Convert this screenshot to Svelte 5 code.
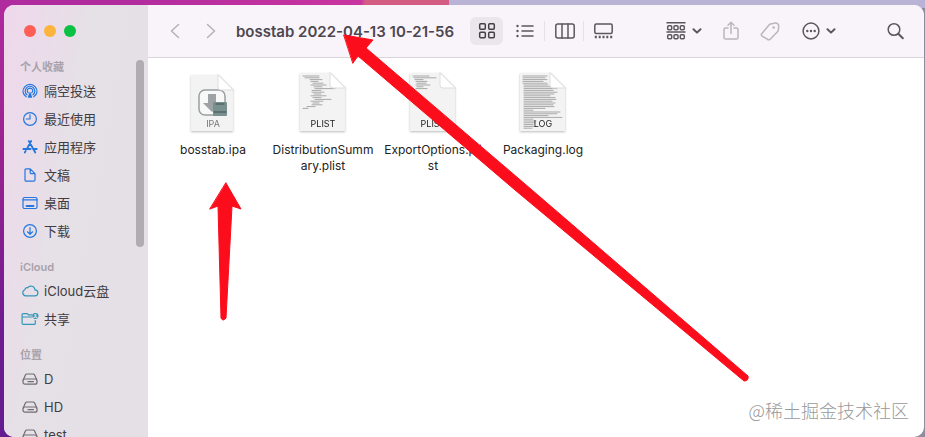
<script>
  const sections = [
    {
      title: "个人收藏",
      items: [
        { label: "隔空投送", icon: "airdrop" },
        { label: "最近使用", icon: "recent" },
        { label: "应用程序", icon: "apps" },
        { label: "文稿", icon: "document" },
        { label: "桌面", icon: "desktop" },
        { label: "下载", icon: "download" },
      ],
    },
    {
      title: "iCloud",
      items: [
        { label: "iCloud云盘", icon: "cloud" },
        { label: "共享", icon: "shared" },
      ],
    },
    {
      title: "位置",
      items: [
        { label: "D", icon: "disk" },
        { label: "HD", icon: "disk" },
        { label: "test", icon: "disk" },
      ],
    },
  ]

  // each line of a file preview is [indent, length]
  const files = [
    { name: "bosstab.ipa", type: "IPA", lines: [] },
    {
      name: "DistributionSummary.plist",
      type: "PLIST",
      lines: [
        [4, 16], [6, 14], [11, 12], [12, 7], [14, 10], [12, 15], [15, 8],
        [16, 20], [13, 9], [13, 12], [15, 7], [12, 15], [14, 8], [16, 16],
        [12, 12], [14, 6], [13, 10], [8, 8], [4, 5],
      ],
    },
    {
      name: "ExportOptions.plist",
      type: "PLIST",
      lines: [[4, 16], [5, 22], [6, 8], [7, 11], [8, 9], [7, 14], [8, 6], [7, 11]],
    },
    {
      name: "Packaging.log",
      type: "LOG",
      lines: [
        [4, 24], [4, 22], [4, 24], [4, 20], [4, 24], [5, 24], [5, 30], [5, 33],
        [5, 29], [5, 33], [5, 30], [5, 26], [5, 31], [5, 32], [5, 28], [5, 31],
        [5, 29], [5, 30], [5, 21], [5, 9], [5, 36], [5, 33], [5, 24], [5, 38],
        [5, 9], [5, 12], [5, 11], [5, 9], [5, 12], [5, 8],
      ],
    },
  ]

  const views = [
    { id: "icons", label: "Icons" },
    { id: "list", label: "List" },
    { id: "columns", label: "Columns" },
    { id: "gallery", label: "Gallery" },
  ]

  let view = $state("icons")
</script>

{#snippet chevron()}
  <svg class="chevron" width="10" height="6" viewBox="0 0 10 6">
    <path d="M1.5 1.2 5 4.6l3.5-3.4" />
  </svg>
{/snippet}

{#snippet sideIcon(name)}
  <svg class="side-icon {name}" width="18" height="16" viewBox="0 0 18 16">
    {#if name === "airdrop"}
      <path d="M5.2 13.8a7 6.7 0 1 1 7.6 0M6 11.8a4.8 4.8 0 1 1 6 0M7.3 9.9a2.7 2.7 0 1 1 3.4 0" />
      <path class="solid" d="m9 8.2 2.3 6.2a7 7 0 0 1-4.6 0z" />
    {:else if name === "recent"}
      <circle cx="9" cy="8" r="6.4" />
      <path d="M9 3.8V8H5.2" />
    {:else if name === "apps"}
      <path class="heavy" d="m7.8 2 6.5 11.5M10.2 2 6.5 8.7M2.4 10h7.2M12 10h3.7M4.7 11.9l-.9 1.6" />
    {:else if name === "document"}
      <path d="M4 3a1.2 1.2 0 0 1 1.2-1.2h4L14 6.6V13a1.2 1.2 0 0 1-1.2 1.2H5.2A1.2 1.2 0 0 1 4 13zM9.2 1.8v3.6a1.2 1.2 0 0 0 1.2 1.2H14" />
    {:else if name === "desktop"}
      <rect x="2" y="2.5" width="14" height="11" rx="1.5" />
      <path d="M2 4.8h14" />
      <path class="heavy" d="M5.5 11h7" />
    {:else if name === "download"}
      <circle cx="9" cy="8" r="6.4" />
      <path d="M9 4.5v6.7M6.4 8.8 9 11.3l2.6-2.5" />
    {:else if name === "cloud"}
      <path d="M4.7 12.9a3.2 3.2 0 0 1-.8-6.2 2.1 2.1 0 0 1 2.7-1.9A4.1 4.1 0 0 1 14 6.9a3 3 0 0 1-.2 6z" />
    {:else if name === "shared"}
      <path d="M11 3.9H7.4L6.2 2.6H2.3a1.2 1.2 0 0 0-1.2 1.2v8.4a1.2 1.2 0 0 0 1.2 1.2h10.8a1.2 1.2 0 0 0 1.2-1.2V9.5M1.1 6h9.5" />
      <circle class="solid" cx="14.4" cy="5" r="3.1" />
      <path class="cutout" d="M12.7 7c.4-1.6 3-1.6 3.4 0" />
      <circle class="hole" cx="14.4" cy="4.1" r="1.1" />
    {:else}
      <path d="m2.2 9 2.2-5a1.7 1.7 0 0 1 1.5-1h6.2a1.7 1.7 0 0 1 1.5 1l2.2 5" />
      <rect x="2" y="8" width="14" height="5.2" rx="2" />
      <path d="M7 10.6h6" stroke-dasharray="1 .5" />
    {/if}
  </svg>
{/snippet}

<div class="wallpaper">
  <div class="window">
    <aside>
      <div class="lights">
        <button class="close" aria-label="Close"></button>
        <button class="minimize" aria-label="Minimize"></button>
        <button class="zoom" aria-label="Zoom"></button>
      </div>

      <nav>
        {#each sections as section}
          <section>
            <h2>{section.title}</h2>
            {#each section.items as item}
              <a href="#{item.label}">
                {@render sideIcon(item.icon)}
                <span>{item.label}</span>
              </a>
            {/each}
          </section>
        {/each}
      </nav>
      <div class="scrollbar"></div>
    </aside>

    <div class="content">
      <header>
        <div class="history">
          <button aria-label="Back">
            <svg width="12" height="18" viewBox="0 0 12 18"><path d="M9.5 2.5 2.5 9l7 6.5" /></svg>
          </button>
          <button aria-label="Forward">
            <svg width="12" height="18" viewBox="0 0 12 18"><path d="M2.5 2.5 9.5 9l-7 6.5" /></svg>
          </button>
        </div>

        <h1>bosstab 2022-04-13 10-21-56</h1>

        <div class="views">
          {#each views as item}
            <button
              class:current={view === item.id}
              aria-label={item.label}
              onclick={() => (view = item.id)}
            >
              <svg width="20" height="18" viewBox="0 0 20 18">
                {#if item.id === "icons"}
                  <rect x="2.7" y="1.7" width="5.6" height="5.6" rx="1" />
                  <rect x="11.7" y="1.7" width="5.6" height="5.6" rx="1" />
                  <rect x="2.7" y="10.2" width="5.6" height="5.6" rx="1" />
                  <rect x="11.7" y="10.2" width="5.6" height="5.6" rx="1" />
                {:else if item.id === "list"}
                  <path d="M6 4H17M6 9H17M6 14H17" />
                  <path class="dots" d="M1.5 4h.01M1.5 9h.01M1.5 14h.01" />
                {:else if item.id === "columns"}
                  <rect x=".8" y="2" width="18.4" height="14" rx="2" />
                  <path d="M7 2v14M13 2v14" />
                {:else}
                  <rect x=".8" y="2" width="17.4" height="9.5" rx="1.5" />
                  <path class="dots square" d="M.8 15h2M4.7 15h2M8.5 15h2M12.3 15h2M16.2 15h2" />
                {/if}
              </svg>
            </button>
          {/each}
        </div>

        <div class="actions">
          <button aria-label="Group">
            <svg width="20" height="20" viewBox="0 0 20 20">
              <path d="M1 1.7h18M1 11h18" />
              {#each [4.7, 13.7] as y}
                {#each [1.7, 8, 14.3] as x}
                  <rect {x} {y} width="4" height="4" rx="1" />
                {/each}
              {/each}
            </svg>
            {@render chevron()}
          </button>
          <button class="dim" aria-label="Share">
            <svg width="18" height="20" viewBox="0 0 18 20">
              <path d="M6 7H3.5A1.5 1.5 0 0 0 2 8.5v8A1.5 1.5 0 0 0 3.5 18h11a1.5 1.5 0 0 0 1.5-1.5v-8A1.5 1.5 0 0 0 14.5 7H12M9 12.5V1.5M6 4.3l3-3 3 3" />
            </svg>
          </button>
          <button class="dim" aria-label="Tags">
            <svg width="20" height="20" viewBox="0 0 20 20">
              <path d="m1.9 12.4 7.5-8.8a2 2 0 0 1 1.2-.7l4.7-.8a3 3 0 0 1 3.4 3.2l-.4 3.9a2 2 0 0 1-.6 1.2l-7.5 7.8a2 2 0 0 1-2.9 0l-5.2-3a2 2 0 0 1-.2-2.8z" />
              <circle cx="13.7" cy="6.5" r=".6" />
            </svg>
          </button>
          <button class="more" aria-label="More">
            <svg width="18" height="18" viewBox="0 0 18 18">
              <circle cx="9" cy="9" r="7.9" />
              <path class="dots" d="M5.3 9h.01M9 9h.01M12.7 9h.01" />
            </svg>
            {@render chevron()}
          </button>
          <button class="search" aria-label="Search">
            <svg width="18" height="18" viewBox="0 0 18 18">
              <circle cx="8" cy="7.5" r="5.8" />
              <path class="handle" d="m12.3 11.8 4.5 4.5" />
            </svg>
          </button>
        </div>
      </header>

      <main>
        {#each files as file}
          <figure>
            <svg width="48" height="62" viewBox="0 0 48 62">
              {#if file.type === "IPA"}
                <path class="paper" d="M2 4h27l15 15v41H2z" />
                <rect class="app" x="10" y="19" width="26" height="25" rx="6" />
                <path class="down" d="M19 23h8v9h5l-9 9-9-9h5z" />
                <rect class="drive" x="24" y="31" width="14" height="14" rx="1" />
                <path class="drive-edge" d="M25 41h12M27 33h8" />
                <path class="fold" d="M29 4v12a3 3 0 0 0 3 3h12z" />
              {:else}
                <path class="paper" d="M1 2h30l15 15v43H1z" />
                {#each file.lines as [x, length], i}
                  <path class="line" d="M{x} {5 + i * 1.8}h{length}" />
                {/each}
                <path class="fold" d="M31 2v12a3 3 0 0 0 3 3h12z" />
              {/if}
              <text x="24" y="56" class:grey={file.type === "IPA"}>{file.type}</text>
            </svg>
            <figcaption>{file.name}</figcaption>
          </figure>
        {/each}
      </main>
    </div>
  </div>

  <svg class="arrows" width="925" height="437" viewBox="0 0 925 437">
    <path d="m226 183 15 26-9-3-6 112q-3 4-5 0l-3-112-8 3z" />
    <path d="m344 35 29 5-7 8 166 142 216 186q1 5-4 5L515 190 358 56l-5 7z" />
  </svg>
  <p class="watermark">@稀土掘金技术社区</p>
</div>

<style>
  :global(body) {
    margin: 0;
    font-family: Inter, "Noto Sans CJK SC", sans-serif;
  }

  .wallpaper {
    position: relative;
    box-sizing: border-box;
    height: 100vh;
    padding: 5px 1px 0 4px;
    overflow: hidden;
    background:
      linear-gradient(100deg, #b02b9e 0 12%, #c9359f 39%, #d35c83 39.5% 48.5%, transparent 48.5%) top / 100% 8px no-repeat,
      linear-gradient(90deg, transparent 48%, #b9b4d5 48%) top / 100% 8px no-repeat,
      linear-gradient(#b02b9e, #95218f 40%, #6f1b91 75%, #641b91) left / 50% 100% no-repeat,
      #8f8c9d;
  }

  .window {
    display: flex;
    height: 100%;
    border-radius: 10px;
    overflow: hidden;
    background: #fff;
  }

  button {
    display: flex;
    align-items: center;
    border: 0;
    padding: 0;
    background: none;
    color: #5c575f;
  }

  svg {
    display: block;
    flex: none;
    fill: none;
    stroke: currentColor;
    stroke-width: 1.5;
    stroke-linecap: round;
    stroke-linejoin: round;
  }

  aside {
    position: relative;
    flex: none;
    width: 144px;
    background: linear-gradient(100deg, #efd8ec, #e6e0e7 40%, #e4e0e6);
  }

  .lights {
    display: flex;
    align-items: center;
    gap: 8px;
    height: 52px;
    padding-left: 20px;
  }

  .lights button {
    width: 12px;
    height: 12px;
    border-radius: 50%;
  }

  .close {
    background: #fd5f57;
  }

  .minimize {
    background: #fdb43c;
  }

  .zoom {
    background: #0bc143;
  }

  nav {
    display: flex;
    flex-direction: column;
    gap: 12px;
  }

  h2 {
    margin: 0;
    padding-left: 16px;
    font-size: 11px;
    line-height: 20px;
    font-weight: 600;
    color: #a9a2ab;
  }

  nav a {
    display: flex;
    align-items: center;
    gap: 5px;
    height: 28px;
    padding-left: 17px;
    font-size: 13px;
    line-height: 16px;
    color: #403c42;
    text-decoration: none;
  }

  .side-icon {
    color: #2377df;
    stroke-width: 1.2;
  }

  .side-icon.cloud,
  .side-icon.shared {
    color: #3296b8;
  }

  .side-icon.disk {
    color: #716b73;
  }

  .heavy {
    stroke-width: 1.8;
  }

  .solid {
    fill: currentColor;
    stroke: none;
  }

  .cutout {
    stroke: #e6e0e7;
  }

  .hole {
    fill: #e6e0e7;
    stroke: none;
  }

  .scrollbar {
    position: absolute;
    top: 55px;
    right: 4px;
    width: 8px;
    height: 187px;
    border-radius: 4px;
    background: #b1acb2;
  }

  .content {
    flex: 1;
    min-width: 0;
  }

  header {
    display: flex;
    align-items: center;
    box-sizing: border-box;
    height: 53px;
    padding: 0 20px 0 21px;
    border-bottom: 1px solid #d9d5da;
    background: #f9f4fa;
  }

  .history {
    display: flex;
    gap: 24px;
  }

  .history button {
    color: #b6b0b8;
  }

  h1 {
    margin: 0 0 0 19px;
    font-size: 15px;
    font-weight: 600;
    color: #4c474f;
    white-space: nowrap;
  }

  .views {
    display: flex;
    margin-left: 16px;
    gap: 6px;
  }

  .views button {
    position: relative;
    justify-content: center;
    width: 33px;
    height: 28px;
    border-radius: 6px;
  }

  .views button:nth-child(n + 3)::before {
    content: "";
    position: absolute;
    left: -4px;
    top: 4px;
    bottom: 4px;
    width: 1px;
    background: #e6e1e7;
  }

  .views .current {
    background: #ebe6ec;
    color: #453f48;
  }

  .dots {
    stroke-width: 2.4;
  }

  .square {
    stroke-linecap: butt;
  }

  .actions {
    display: flex;
    align-items: center;
    gap: 20px;
    margin-left: auto;
  }

  .actions button {
    gap: 6px;
  }

  .actions .more {
    margin: 0 30px 0 2px;
  }

  .actions .dim {
    color: #bbb5bd;
  }

  .actions .chevron,
  .handle {
    stroke-width: 2;
  }

  main {
    display: flex;
    flex-wrap: wrap;
    padding: 13px 10px;
  }

  figure {
    display: flex;
    flex-direction: column;
    align-items: center;
    width: 110px;
    margin: 0;
  }

  figure svg {
    filter: drop-shadow(0 1px 1px #0004);
  }

  .paper {
    fill: #f3f3f3;
    stroke: none;
  }

  .fold {
    fill: #fff;
    stroke: #ddd;
    stroke-width: 1;
  }

  .line {
    stroke: #777;
    stroke-width: 0.6;
  }

  .app {
    fill: #f8f8f8;
    stroke: #98a09f;
  }

  .down {
    fill: #9da3a4;
    stroke: none;
  }

  .drive {
    fill: #78908f;
    stroke: none;
  }

  .drive-edge {
    stroke: #40514f;
    stroke-width: 1;
  }

  text {
    fill: #222;
    stroke: none;
    font-size: 9px;
    text-anchor: middle;
  }

  .grey {
    fill: #777;
  }

  figcaption {
    width: 102px;
    margin-top: 9px;
    font-size: 12px;
    line-height: 16px;
    text-align: center;
    color: #222;
    word-break: break-all;
  }

  .arrows {
    position: absolute;
    top: 0;
    left: 0;
    color: #fc0d1b;
    fill: currentColor;
    stroke-width: 1;
    pointer-events: none;
  }

  .watermark {
    position: absolute;
    right: 16px;
    bottom: 15px;
    margin: 0;
    font-family: "Noto Sans CJK SC", sans-serif;
    font-size: 18px;
    line-height: 24px;
    font-weight: 300;
    color: #999;
  }
</style>
